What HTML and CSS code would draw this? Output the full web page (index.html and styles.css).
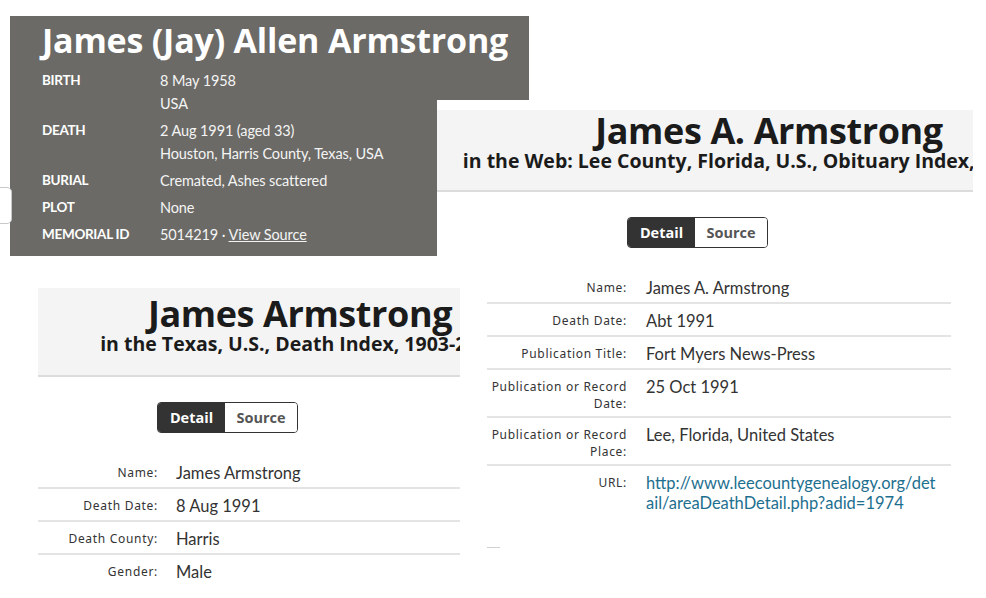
FILE: index.html
```html
<!DOCTYPE html>
<html lang="en">
<head>
<meta charset="utf-8">
<title>James Armstrong records</title>
<link rel="stylesheet" href="styles.css">
</head>
<body>
<div class="canvas">
  <section class="fg">
    <h1 class="fg-title">James (Jay) Allen Armstrong</h1>
    <dl class="fg-facts">
      <dt>Birth</dt>
      <dd><div>8 May 1958</div><div>USA</div></dd>
      <dt>Death</dt>
      <dd><div>2 Aug 1991 (aged 33)</div><div>Houston, Harris County, Texas, USA</div></dd>
      <dt>Burial</dt>
      <dd>Cremated, Ashes scattered</dd>
      <dt>Plot</dt>
      <dd>None</dd>
      <dt>Memorial ID</dt>
      <dd>5014219 · <a class="fg-link" href="#">View Source</a></dd>
    </dl>
  </section>

  <div class="tab-stub"></div>

  <section class="anc anc-lee">
    <header class="anc-head">
      <div class="anc-head-inner">
        <h2 class="anc-title">James A. Armstrong</h2>
        <p class="anc-sub">in the Web: Lee County, Florida, U.S., Obituary Index, 1907-2023</p>
      </div>
    </header>
    <div class="toggle">
      <span class="tog tog-on">Detail</span><span class="tog tog-off">Source</span>
    </div>
    <div class="rows">
      <div class="row"><div class="lbl">Name:</div><div class="val">James A. Armstrong</div></div>
      <div class="row"><div class="lbl">Death Date:</div><div class="val">Abt 1991</div></div>
      <div class="row"><div class="lbl">Publication Title:</div><div class="val">Fort Myers News-Press</div></div>
      <div class="row"><div class="lbl">Publication or Record Date:</div><div class="val">25 Oct 1991</div></div>
      <div class="row"><div class="lbl">Publication or Record Place:</div><div class="val">Lee, Florida, United States</div></div>
      <div class="row"><div class="lbl">URL:</div><div class="val"><a class="url" href="#">http://www.leecountygenealogy.org/det<br>ail/areaDeathDetail.php?adid=1974</a></div></div>
    </div>
    <div class="stub-line"></div>
  </section>

  <section class="anc anc-tx">
    <header class="anc-head">
      <div class="anc-head-inner">
        <h2 class="anc-title">James Armstrong</h2>
        <p class="anc-sub">in the Texas, U.S., Death Index, 1903-2000</p>
      </div>
    </header>
    <div class="toggle">
      <span class="tog tog-on">Detail</span><span class="tog tog-off">Source</span>
    </div>
    <div class="rows">
      <div class="row"><div class="lbl">Name:</div><div class="val">James Armstrong</div></div>
      <div class="row"><div class="lbl">Death Date:</div><div class="val">8 Aug 1991</div></div>
      <div class="row"><div class="lbl">Death County:</div><div class="val">Harris</div></div>
      <div class="row"><div class="lbl">Gender:</div><div class="val">Male</div></div>
    </div>
  </section>
</div>
</body>
</html>
```

FILE: styles.css
```css
* { box-sizing: border-box; }
html, body { margin: 0; padding: 0; background: #fff; }
body { font-family: "Lato", "Liberation Sans", sans-serif; }

.canvas {
  position: relative;
  width: 986px;
  height: 598px;
  overflow: hidden;
  background: #fff;
}

/* ---------- Find a Grave panel ---------- */
.fg {
  position: absolute;
  left: 10px;
  top: 16px;
  width: 519px;
  height: 240px;
  background: #6b6a66;
  color: #fff;
  padding: 4px 0 0 32px;
  z-index: 1;
}
.fg-title {
  margin: 0 0 9px;
  font-family: "Open Sans", sans-serif;
  font-weight: 700;
  font-size: 34px;
  line-height: 40px;
  letter-spacing: -0.2px;
  color: #fff;
}
.fg-facts {
  margin: 0;
  display: grid;
  grid-template-columns: 118px auto;
  row-gap: 4px;
  font-size: 14.5px;
  line-height: 23px;
}
.fg-facts dt {
  font-weight: 700;
  font-size: 13.5px;
  text-transform: uppercase;
  letter-spacing: -0.3px;
  color: #fff;
}
.fg-facts dd {
  margin: 0;
  color: #f4f4f4;
  letter-spacing: -0.1px;
}
.fg-link { color: #f4f4f4; text-decoration: underline; }

.tab-stub {
  position: absolute;
  left: -4px;
  top: 187px;
  width: 16px;
  height: 37px;
  background: #fff;
  border: 1px solid #c8c8c8;
  border-radius: 0 5px 5px 0;
  z-index: 2;
}

/* ---------- Ancestry panels ---------- */
.anc {
  position: absolute;
  background: #fff;
  overflow: hidden;
  color: #222;
}
.anc-lee {
  left: 437px;
  top: 100px;
  width: 536px;
  height: 498px;
  padding-top: 10px;
  z-index: 2;
}
.anc-tx {
  left: 38px;
  top: 288px;
  width: 422px;
  height: 310px;
  z-index: 3;
}
.anc-head {
  background: #f4f4f4;
  border-bottom: 2px solid #dcdcdc;
  overflow: hidden;
}
.anc-lee .anc-head { height: 82px; padding-top: 1px; }
.anc-tx .anc-head { height: 89px; padding-top: 6px; }
.anc-head-inner {
  text-align: center;
  white-space: nowrap;
}
.anc-lee .anc-head-inner { width: 664px; }
.anc-tx .anc-head-inner { width: 524px; }
.anc-title {
  margin: 0;
  font-family: "Open Sans", sans-serif;
  font-weight: 700;
  font-size: 36px;
  line-height: 40px;
  letter-spacing: -0.4px;
  color: #1b1b1b;
}
.anc-sub {
  margin: 0;
  font-family: "Open Sans", sans-serif;
  font-weight: 700;
  font-size: 19.5px;
  line-height: 20px;
  color: #1b1b1b;
}

.toggle {
  display: flex;
  width: 141px;
  height: 31px;
  margin-top: 25px;
  border: 1px solid #333;
  border-radius: 4px;
  overflow: hidden;
  font-family: "Open Sans", sans-serif;
  font-weight: 700;
  font-size: 14.5px;
}
.anc-lee .toggle { margin-left: 190px; }
.anc-tx .toggle { margin-left: 119px; }
.tog {
  display: flex;
  align-items: center;
  justify-content: center;
}
.tog-on { width: 67px; background: #333; color: #fff; }
.tog-off { flex: 1; background: #fff; color: #555; }

.rows {
  margin-top: 23px;
}
.anc-lee .rows { margin-left: 50px; width: 464px; }
.anc-tx .rows { width: 422px; }
.row {
  display: flex;
  align-items: flex-start;
  padding: 7px 0 4px;
  border-bottom: 2px solid #e4e4e4;
}
.row:last-child { border-bottom: none; }
.lbl {
  flex: none;
  text-align: right;
  font-family: "Noto Sans", sans-serif;
  font-size: 12px;
  line-height: 17px;
  letter-spacing: 0.7px;
  color: #333;
  padding-top: 1px;
}
.anc-lee .lbl { width: 140px; margin-right: 19px; }
.anc-tx .lbl { width: 120px; margin-right: 18px; }
.val {
  flex: 1;
  font-family: "Lato", sans-serif;
  font-size: 16.5px;
  line-height: 20px;
  color: #333;
}
.url { color: #1d6f8f; text-decoration: none; }
.stub-line {
  width: 13px;
  height: 1px;
  margin: 30px 0 0 50px;
  background: #d0d0d0;
}
```
